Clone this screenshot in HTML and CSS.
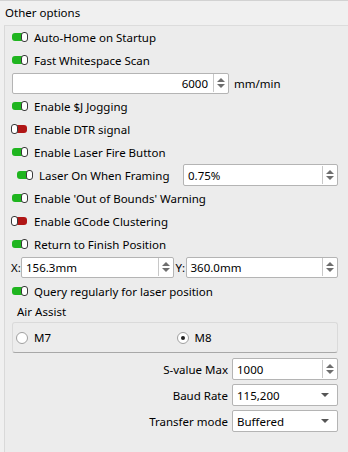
FILE: index.html
```html
<!DOCTYPE html>
<html lang="en">
<head>
    <meta charset="UTF-8">
    <title>Other options</title>
    <link rel="stylesheet" href="styles.css">
</head>
<body>
    <div class="title">Other options</div>

    <div class="panel">
        <div class="row"><span class="toggle on"></span>Auto-Home on Startup</div>
        <div class="row"><span class="toggle on"></span>Fast Whitespace Scan</div>
        <div class="row">
            <div class="spin speed"><span class="val right">6000</span><span class="arrows"></span></div>
            <span class="unit">mm/min</span>
        </div>
        <div class="row"><span class="toggle on"></span>Enable $J Jogging</div>
        <div class="row"><span class="toggle off"></span>Enable DTR signal</div>
        <div class="row"><span class="toggle on"></span>Enable Laser Fire Button</div>
        <div class="row sub">
            <span class="toggle on"></span>Laser On When Framing
            <div class="spin framing"><span class="val">0.75%</span><span class="arrows"></span></div>
        </div>
        <div class="row"><span class="toggle on"></span>Enable 'Out of Bounds' Warning</div>
        <div class="row"><span class="toggle off"></span>Enable GCode Clustering</div>
        <div class="row"><span class="toggle on"></span>Return to Finish Position</div>
        <div class="row xy">
            <span class="axis">X:</span>
            <div class="spin"><span class="val">156.3mm</span><span class="arrows"></span></div>
            <span class="axis">Y:</span>
            <div class="spin"><span class="val">360.0mm</span><span class="arrows"></span></div>
        </div>
        <div class="row gap"><span class="toggle on"></span>Query regularly for laser position</div>
        <div class="label">Air Assist</div>
        <div class="radios">
            <div class="radio"><span class="dot"></span>M7</div>
            <div class="radio"><span class="dot checked"></span>M8</div>
        </div>

        <div class="fields">
            <span class="name">S-value Max</span>
            <div class="spin"><span class="val">1000</span><span class="arrows"></span></div>
            <span class="name">Baud Rate</span>
            <div class="combo"><span class="val">115,200</span><span class="caret"></span></div>
            <span class="name">Transfer mode</span>
            <div class="combo"><span class="val">Buffered</span><span class="caret"></span></div>
        </div>
    </div>
</body>
</html>
```

FILE: styles.css
```css
body {
    margin: 0;
    background: #f0f0f0;
    font-family: "Noto Sans", "Open Sans", sans-serif;
    font-size: 11.5px;
    color: #000;
    border-top: 1px solid #d2d2d2;
    height: 451px;
    overflow: hidden;
}

.title {
    padding: 4px 0 0 5px;
    height: 20px;
}

.panel {
    margin-left: 4px;
    border-left: 1px solid #d9d9d9;
    border-top: 1px solid #dcdcdc;
    background: #ececec;
    padding: 0 10px 0 7px;
    height: 430px;
}

.row {
    display: flex;
    align-items: center;
    height: 22px;
    margin-bottom: 1px;
    white-space: nowrap;
}

.row.sub {
    padding-left: 5px;
}

.row.gap {
    margin-top: 2px;
}

/* on/off switch icon */
.toggle {
    position: relative;
    width: 15px;
    height: 8px;
    border-radius: 3px;
    margin-right: 7px;
    flex-shrink: 0;
}

.toggle.on {
    background: #1fb51f;
}

.toggle.off {
    background: #b01515;
}

.toggle::after {
    content: "";
    position: absolute;
    top: -1px;
    width: 5px;
    height: 8px;
    border: 1px solid #3a3a3a;
    border-radius: 3px;
    background: #fff;
}

.toggle.on::after {
    right: -1px;
}

.toggle.off::after {
    left: -1px;
}

.spin, .combo {
    display: flex;
    align-items: center;
    height: 20px;
    background: #fff;
    border: 1px solid #b4b4b4;
    border-radius: 2px;
    box-sizing: border-box;
}

.spin .val, .combo .val {
    flex: 1;
    padding-left: 4px;
}

.spin .val.right {
    text-align: right;
    padding-right: 5px;
}

.arrows {
    position: relative;
    width: 14px;
    height: 18px;
    border-left: 1px solid #c8c8c8;
    flex-shrink: 0;
}

.arrows::before, .arrows::after {
    content: "";
    position: absolute;
    left: 3px;
    border-left: 4px solid transparent;
    border-right: 4px solid transparent;
}

.arrows::before {
    top: 4px;
    border-bottom: 4px solid #6e6e6e;
}

.arrows::after {
    bottom: 4px;
    border-top: 4px solid #6e6e6e;
}

.speed {
    width: 217px;
    height: 21px;
}

.unit {
    margin-left: 5px;
}

.framing {
    margin-left: auto;
    width: 155px;
    height: 22px;
}

.xy .axis {
    width: 10px;
    margin-left: -1px;
}

.xy .spin {
    flex: 1;
    height: 21px;
}

.xy .spin:first-of-type {
    margin-right: 3px;
}

.label {
    height: 19px;
    line-height: 18px;
    padding-left: 5px;
}

.radios {
    display: grid;
    grid-template-columns: 1fr 1fr;
    height: 29px;
    align-items: center;
    border: 1px solid #dadada;
    border-bottom-color: #a8a8a8;
    border-radius: 3px;
    padding-left: 3px;
}

.radio {
    display: flex;
    align-items: center;
}

.dot {
    position: relative;
    width: 12px;
    height: 12px;
    border: 1px solid #a0a0a0;
    border-radius: 50%;
    background: #fff;
    margin-right: 6px;
    box-sizing: border-box;
}

.dot.checked::after {
    content: "";
    position: absolute;
    left: 3px;
    top: 3px;
    width: 4px;
    height: 4px;
    border-radius: 50%;
    background: #222;
}

.fields {
    display: grid;
    grid-template-columns: 1fr 106px;
    column-gap: 4px;
    row-gap: 4px;
    align-items: center;
    margin-top: 5px;
}

.fields .name {
    text-align: right;
}

.fields .spin, .fields .combo {
    height: 22px;
}

.caret {
    width: 0;
    height: 0;
    border-left: 4px solid transparent;
    border-right: 4px solid transparent;
    border-top: 4px solid #555;
    margin-right: 8px;
}
```
